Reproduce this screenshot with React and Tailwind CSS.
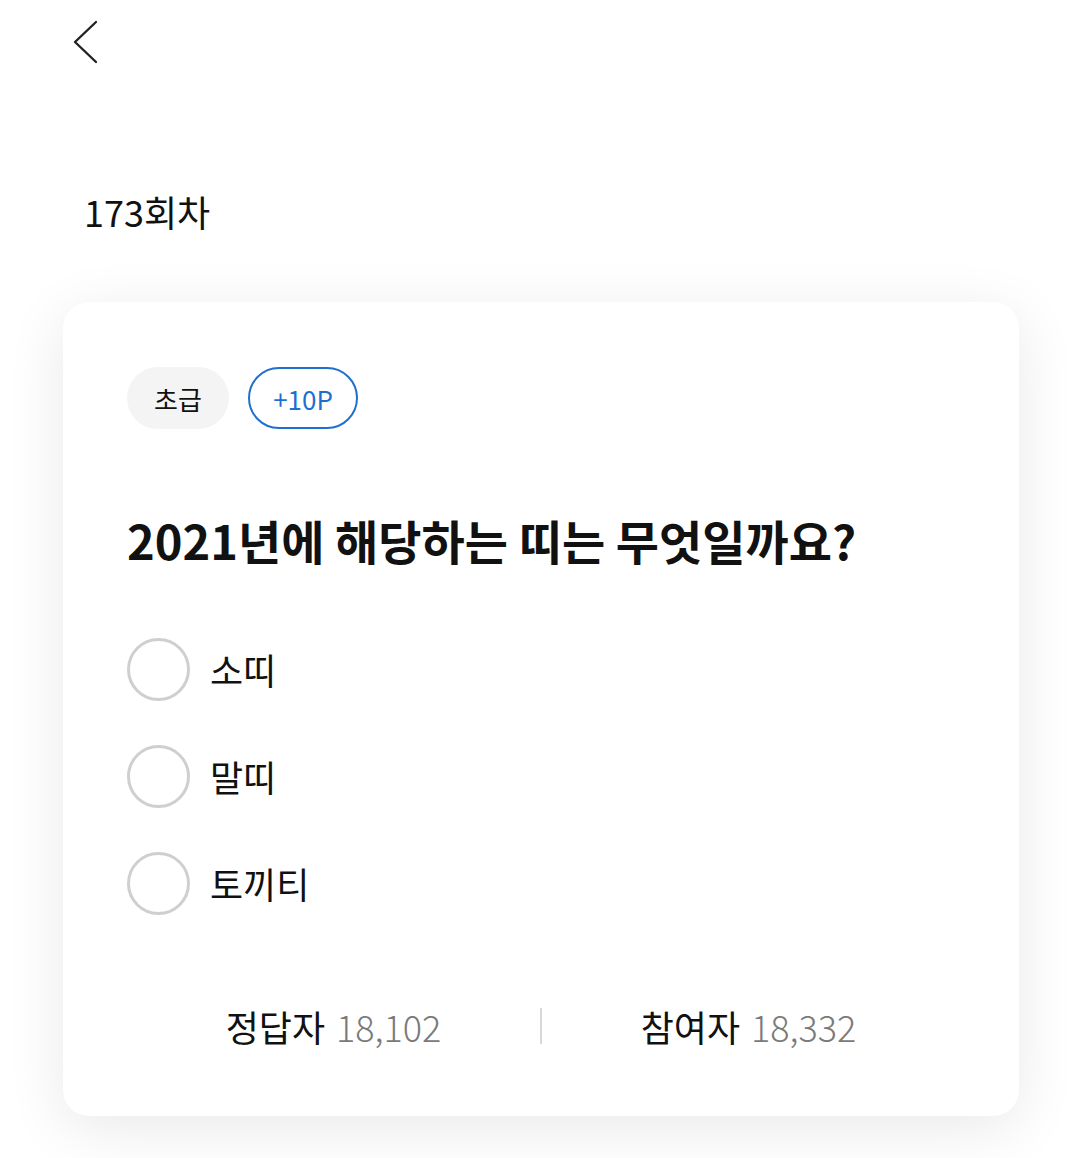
import React from "react";

const font = { fontFamily: '"Noto Sans CJK KR", "Noto Sans", sans-serif' };

function Option({ label }) {
  return (
    <div className="flex items-center h-[62px]">
      <div className="w-[63px] h-[63px] rounded-full border-[3px] border-[#cfcfcf] bg-white shrink-0" />
      <span className="ml-[20px] text-[36px] leading-[48px] text-[#111]">{label}</span>
    </div>
  );
}

export default function App() {
  return (
    <div className="w-[1080px] min-h-[1158px] bg-white overflow-hidden" style={font}>
      <div className="pt-[20px] pl-[71px] h-[84px]">
        <svg width="28" height="44" viewBox="0 0 28 44" fill="none">
          <path d="M25 2 L4 22 L25 42" stroke="#222" strokeWidth="2.4" strokeLinecap="round" strokeLinejoin="round" />
        </svg>
      </div>
      <div className="mt-[103px] pl-[84px] text-[36px] leading-[48px] text-[#111]">173회차</div>
      <div className="mt-[67px] ml-[63px] w-[956px] rounded-[26px] bg-white shadow-[0_12px_60px_rgba(0,0,0,0.09)] pt-[65px] px-[64px] pb-[66px]">
        <div className="flex items-center gap-[19px]">
          <div className="w-[102px] h-[62px] rounded-full bg-[#f4f4f4] flex items-center justify-center text-[26px] text-[#111]">초급</div>
          <div className="w-[110px] h-[62px] rounded-full border-2 border-[#1f6fce] flex items-center justify-center text-[26px] text-[#1f6fce]">+10P</div>
        </div>
        <h1 className="mt-[81px] text-[47px] leading-[60px] font-bold text-[#111]">
          2021년에 해당하는 띠는 무엇일까요?
        </h1>
        <div className="mt-[68px] flex flex-col gap-[45px]">
          <Option label="소띠" />
          <Option label="말띠" />
          <Option label="토끼티" />
        </div>
        <div className="mt-[88px] flex items-center h-[48px]">
          <div className="flex-1 flex justify-center text-[36px] leading-[48px]">
            <span className="text-[#111]">정답자</span>
            <span className="ml-[11px] text-[#7a7a7a] font-light">18,102</span>
          </div>
          <div className="w-[2px] h-[36px] bg-[#d8d8d8]" />
          <div className="flex-1 flex justify-center text-[36px] leading-[48px]">
            <span className="text-[#111]">참여자</span>
            <span className="ml-[11px] text-[#7a7a7a] font-light">18,332</span>
          </div>
        </div>
      </div>
    </div>
  );
}
